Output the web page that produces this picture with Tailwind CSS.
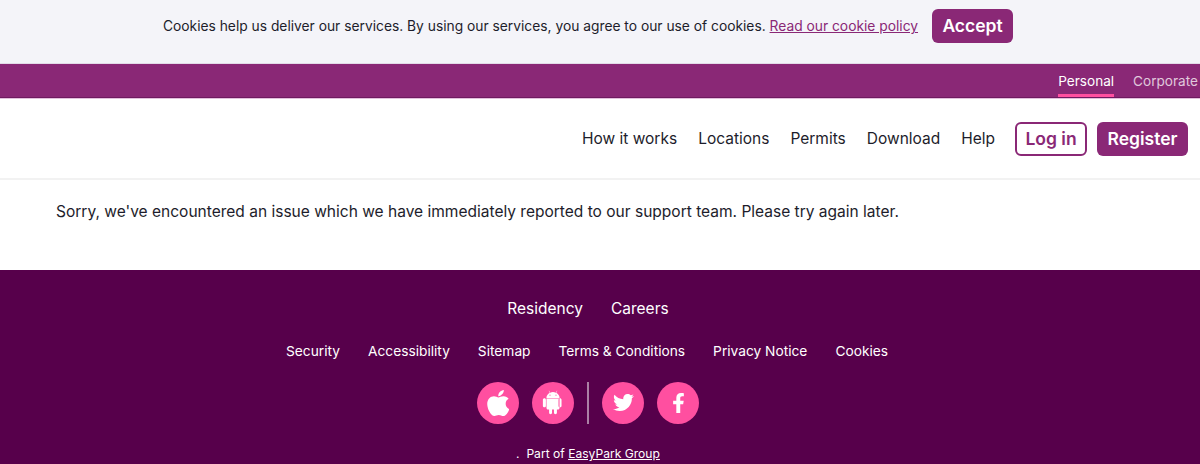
<!DOCTYPE html>
<html lang="en">
    <head>
        <meta charset="UTF-8">
        <meta name="viewport" content="width=device-width, initial-scale=1.0">
        <title>Parking</title>
        <script src="https://cdn.jsdelivr.net/npm/@tailwindcss/browser@4"></script>
    </head>
    <body class="font-['Inter',sans-serif] bg-white text-[#1d1d2b] overflow-hidden">

        <!-- Cookie bar -->
        <div class="flex items-center justify-center gap-[14px] h-[64px] pr-[24px] pb-[10px] bg-[#f4f4f9] border-b border-[#e3dbe8] text-[13.8px]">
            <p>Cookies help us deliver our services. By using our services, you agree to our use of cookies. <a href="#" class="text-[#8a2876] underline">Read our cookie policy</a></p>
            <button class="h-[34px] w-[81px] pt-[2px] -translate-y-px rounded-md bg-[#8a2876] text-white text-[17.5px] font-semibold">Accept</button>
        </div>

        <!-- Top bar -->
        <div class="flex justify-end h-[34px] pr-[2px] gap-[19px] bg-[#8a2876] border-b border-[#6f1a60] text-[13.6px]">
            <a href="#" class="flex items-center h-[33px] text-white border-b-[3px] border-[#ff4fa0] pt-[5px]">Personal</a>
            <a href="#" class="flex items-center h-[33px] pt-[2px] text-white/75">Corporate</a>
        </div>

        <!-- Nav -->
        <nav class="flex items-center justify-end h-[82px] pr-[12px] border-t border-t-[#e3bfdc] border-b-2 border-b-[#f2f2f2] text-[15.5px]">
            <a href="#" class="mr-[21px]">How it works</a>
            <a href="#" class="mr-[21px]">Locations</a>
            <a href="#" class="mr-[21px]">Permits</a>
            <a href="#" class="mr-[21px]">Download</a>
            <a href="#" class="mr-[20px]">Help</a>
            <a href="#" class="flex items-center justify-center w-[72px] h-[34px] mr-[10px] pt-[2px] rounded-md border-2 border-[#8a2876] text-[#8a2876] text-[17.5px] font-semibold">Log in</a>
            <a href="#" class="flex items-center justify-center w-[91px] h-[34px] pt-[2px] rounded-md bg-[#8a2876] text-white text-[17.5px] font-semibold">Register</a>
        </nav>

        <!-- Message -->
        <main class="h-[90px] pl-[56px] pt-[20px] text-[15.52px]">
            <p>Sorry, we've encountered an issue which we have immediately reported to our support team. Please try again later.</p>
        </main>

        <!-- Footer -->
        <footer class="flex flex-col items-center h-[194px] pr-[24px] bg-[#57004b] text-white">
            <div class="flex gap-[28px] mt-[27px] text-[15.5px]">
                <a href="#">Residency</a>
                <a href="#">Careers</a>
            </div>
            <div class="flex gap-[28px] mt-[21px] mr-[2px] text-[13.74px]">
                <a href="#">Security</a>
                <a href="#">Accessibility</a>
                <a href="#">Sitemap</a>
                <a href="#">Terms &amp; Conditions</a>
                <a href="#">Privacy Notice</a>
                <a href="#">Cookies</a>
            </div>
            <div class="flex items-center mt-[20px]">
                <a href="#" class="flex items-center justify-center w-[42px] h-[42px] rounded-full bg-[#ff4fa0]">
                    <svg class="w-[22.5px] h-[30px] fill-white" viewBox="0 0 384 512"><path d="M318.7 268.7c-.2-36.7 16.4-64.4 50-84.8-18.8-26.9-47.2-41.7-84.7-44.6-35.5-2.8-74.3 20.7-88.5 20.7-15 0-49.4-19.7-76.4-19.7C63.3 141.2 4 184.8 4 273.5q0 39.3 14.4 81.2c12.8 36.7 59 126.7 107.2 125.2 25.2-.6 43-17.9 75.8-17.9 31.8 0 48.3 17.9 76.4 17.9 48.6-.7 90.4-82.5 102.6-119.3-65.2-30.7-61.7-90-61.7-91.9zm-56.6-164.2c27.3-32.4 24.8-61.9 24-72.5-24.1 1.4-52 16.4-67.9 34.9-17.5 19.8-27.8 44.3-25.6 71.9 26.1 2 49.9-11.4 69.5-34.3z"/></svg>
                </a>
                <a href="#" class="flex items-center justify-center w-[42px] h-[42px] ml-[13px] rounded-full bg-[#ff4fa0]">
                    <svg class="w-[24px] h-[27px] fill-white" viewBox="0 0 448 512"><path d="M89.6 204.5v115.8c0 15.4-12.1 27.7-27.5 27.7-15.3 0-30.1-12.4-30.1-27.7V204.5c0-15.1 14.8-27.5 30.1-27.5 15.1 0 27.5 12.4 27.5 27.5zm10.8 157c0 16.4 13.2 29.6 29.6 29.6h19.9l.3 61.1c0 36.9 55.2 36.6 55.2 0v-61.1h37.2v61.1c0 36.7 55.5 36.8 55.5 0v-61.1h20.2c16.2 0 29.4-13.2 29.4-29.6V182.1H100.4v179.4zm248-189.1H99.3c0-42.8 25.6-80 63.6-99.4l-19.1-35.3c-2.8-4.9 4.3-8 6.7-3.8l19.4 35.6c34.9-15.5 75-14.7 108.3 0L297.5 34c2.5-4.3 9.5-1.1 6.7 3.8L285.1 73c37.7 19.4 63.3 56.6 63.3 99.4zm-170.7-55.5c0-5.7-4.6-10.5-10.5-10.5-5.7 0-10.2 4.8-10.2 10.5s4.6 10.5 10.2 10.5c5.9 0 10.5-4.8 10.5-10.5zm113.4 0c0-5.7-4.6-10.5-10.2-10.5-5.9 0-10.5 4.8-10.5 10.5s4.6 10.5 10.5 10.5c5.6 0 10.2-4.8 10.2-10.5zm94.8 87.6v115.8c0 15.3-14.8 27.7-30.1 27.7-15.4 0-27.5-12.4-27.5-27.7V204.5c0-15.4 12.1-27.5 27.5-27.5 15.3 0 30.1 12.1 30.1 27.5z"/></svg>
                </a>
                <span class="w-[2px] h-[42px] mx-[13px] bg-white/50"></span>
                <a href="#" class="flex items-center justify-center w-[42px] h-[42px] rounded-full bg-[#ff4fa0]">
                    <svg class="w-[21px] h-[21px] fill-white" viewBox="0 0 512 512"><path d="M459.37 151.716c.325 4.548.325 9.097.325 13.645 0 138.72-105.583 298.558-298.558 298.558-59.452 0-114.68-17.219-161.137-47.106 8.447.974 16.568 1.299 25.34 1.299 49.055 0 94.213-16.568 130.274-44.832-46.132-.975-84.792-31.188-98.112-72.772 6.498.974 12.995 1.624 19.818 1.624 9.421 0 18.843-1.3 27.614-3.573-48.081-9.747-84.143-51.98-84.143-102.985v-1.299c13.969 7.797 30.214 12.67 47.431 13.319-28.264-18.843-46.781-51.005-46.781-87.391 0-19.492 5.197-37.36 14.294-52.954 51.655 63.675 129.3 105.258 216.365 109.807-1.624-7.797-2.599-15.918-2.599-24.04 0-57.828 46.782-104.934 104.934-104.934 30.213 0 57.502 12.67 76.67 33.137 23.715-4.548 46.456-13.32 66.599-25.34-7.798 24.366-24.366 44.833-46.132 57.827 21.117-2.273 41.584-8.122 60.426-16.243-14.292 20.791-32.161 39.308-52.628 54.253z"/></svg>
                </a>
                <a href="#" class="flex items-center justify-center w-[42px] h-[42px] ml-[13px] rounded-full bg-[#ff4fa0]">
                    <svg class="w-[13px] h-[20px] fill-white" viewBox="0 0 320 512"><path d="M279.14 288l14.22-92.66h-88.91v-60.13c0-25.35 12.42-50.06 52.24-50.06h40.42V6.26S260.43 0 225.36 0c-73.22 0-121.08 44.38-121.08 124.72v70.62H22.89V288h81.39v224h100.17V288z"/></svg>
                </a>
            </div>
            <p class="mt-[21px] text-[12.1px]">.&nbsp; Part of <a href="#" class="underline">EasyPark Group</a></p>
        </footer>

    </body>
</html>
